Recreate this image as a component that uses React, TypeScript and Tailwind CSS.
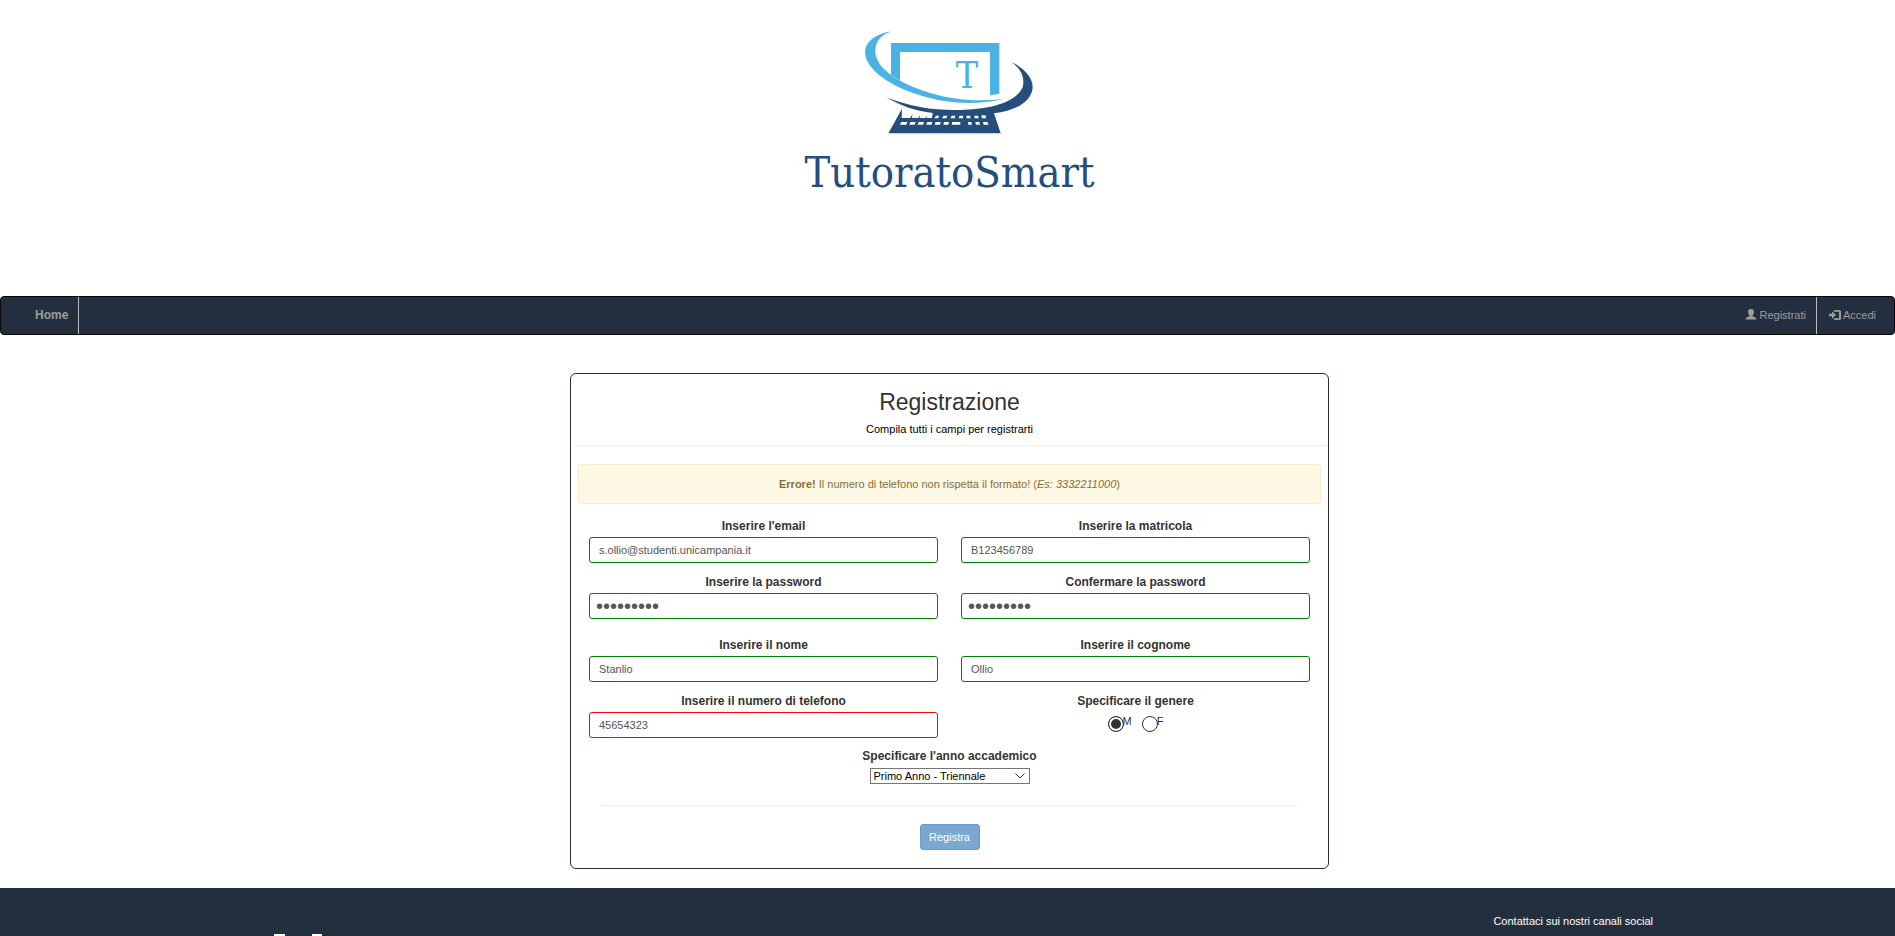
import React, { useState } from "react";

function LaptopLogo() {
  return (
    <svg viewBox="0 0 960 360" width="320" height="120" aria-hidden="true">
      <g fill="#4bb3e3">
        <path d="M303 69H628V221L600 226V96H330V182L303 164Z" />
        <path d="M306 34C240 44 222 78 226 104C232 150 300 198 390 226C470 252 560 256 642 237C560 246 480 240 400 212C310 180 262 142 256 98C254 66 272 44 306 34Z" />
        <text x="531" y="205" textAnchor="middle" fontSize="112" fontFamily="'DejaVu Serif Condensed','DejaVu Serif',serif">
          T
        </text>
      </g>
      <g fill="#254e7d">
        <path d="M664 126C704 144 728 174 728 200C727 242 680 272 612 280L632 340H295L336 266L335 294H360L368 282L365 294H384L390 284L388 294H406L412 286L409 294H426L428 279C380 274 330 258 290 232C360 262 440 272 510 270C610 268 680 244 698 202C706 170 690 144 664 126Z" />
      </g>
      <g fill="#fff">
        <path d="M461 287h11l-3 8h-13zM485 287h11l-2 8h-12zM508 287h11v8h-12zM530 287h11v8h-12zM553 287h11l2 8h-12zM574 286h12l3 9h-13zM438 287h10l-4 8h-11z" />
        <path d="M334 306h18l-3 8h-19zM361 306h16l-3 8h-16zM386 306h16l-3 8h-16zM412 306h15l-3 8h-15zM437 306h15l-2 8h-16zM462 306h15l-2 8h-15zM487 306h24v8h-26zM534 306h10l2 8h-11zM556 306h12l2 8h-12zM579 306h13l4 8h-15z" />
      </g>
    </svg>
  );
}

function UserIcon() {
  return (
    <svg viewBox="0 0 12 11" width="12" height="11" fill="currentColor" aria-hidden="true">
      <path d="M6 0C8 0 9 1.300 9 3C9 4.600 8.300 5.700 7.500 6.400V7.300C9 8 11.500 8.500 11.500 10.500H.5C.5 8.500 3 8 4.500 7.300V6.400C3.700 5.700 3 4.600 3 3C3 1.300 4 0 6 0Z" />
    </svg>
  );
}

function LoginIcon() {
  return (
    <svg viewBox="0 0 12 10" width="12" height="10" fill="currentColor" aria-hidden="true">
      <path d="M0 3.800H3V1.300L7 5L3 8.700V6.200H0ZM5 0H10.500Q12 0 12 1.500V8.500Q12 10 10.500 10H5V8.200H10V1.800H5Z" />
    </svg>
  );
}

type FieldProps = {
  id: string;
  label: string;
  value: string;
  type?: string;
  invalid?: boolean;
};

function Field({ id, label, value, type = "text", invalid = false }: FieldProps) {
  const [text, setText] = useState(value);
  return (
    <div className="flex flex-col">
      <label htmlFor={id} className="pb-0.5 text-center text-xs leading-[18px] font-bold">
        {label}
      </label>
      <input
        id={id}
        type={type}
        value={text}
        onChange={(e) => setText(e.target.value)}
        className={`h-[26px] w-full rounded-[3px] border bg-white text-[#555] outline-none ${
          type === "password" ? "px-[6px] text-xl" : "px-[9px] text-[11px]"
        } ${invalid ? "border-[#f00]" : "border-[#008000]"}`}
      />
    </div>
  );
}

function Radio({ value, checked, onSelect }: { value: string; checked: boolean; onSelect: () => void }) {
  return (
    <label className="flex items-start">
      <input
        type="radio"
        name="genere"
        value={value}
        checked={checked}
        onChange={onSelect}
        className="size-4 appearance-none rounded-full border border-[#333] bg-white checked:bg-[#333] checked:shadow-[inset_0_0_0_2px_#fff]"
      />
      <span className="-ml-px leading-[10px]">{value}</span>
    </label>
  );
}

export default function App() {
  const [gender, setGender] = useState("M");
  return (
    <div className="flex h-screen flex-col overflow-hidden bg-white font-['Liberation_Sans',Arial,sans-serif] text-[11px] leading-4 text-[#333]">
      <header className="flex h-[296px] shrink-0 flex-col items-center pt-5 pl-1">
        <LaptopLogo />
        <div className="pt-0.5 text-[43px] leading-[60px] text-[#254e7d] font-['DejaVu_Serif_Condensed','DejaVu_Serif',serif]">
          TutoratoSmart
        </div>
      </header>

      <nav className="flex h-[39px] shrink-0 items-stretch justify-between rounded border border-[#080808] bg-[#232f3e] text-[#9d9d9d]">
        <a
          href="#home"
          className="flex items-center border-r border-[#bbb] pr-[10px] pb-0.5 pl-[34px] text-xs font-bold"
        >
          Home
        </a>
        <div className="flex items-stretch">
          <a href="#registrati" className="flex items-center gap-[3px] border-r border-[#bbb] pr-[10px] pb-0.5">
            <UserIcon />
            Registrati
          </a>
          <a href="#accedi" className="flex items-center gap-0.5 pr-[18px] pb-0.5 pl-3">
            <LoginIcon />
            Accedi
          </a>
        </div>
      </nav>

      <main className="flex shrink-0 justify-center pt-[38px] pb-[19px] pl-1">
        <form
          onSubmit={(e) => e.preventDefault()}
          className="w-full max-w-[759px] rounded-md border border-[#232f3e] pb-[18px]"
        >
          <div className="mx-px border-b border-[#eee] pt-[14px] pb-2 text-center">
            <h1 className="text-[23px] leading-7">Registrazione</h1>
            <p className="pt-[5px] text-black">Compila tutti i campi per registrarti</p>
          </div>

          <div className="mx-[7px] mt-[18px] rounded-[3px] border border-[#faebcc] bg-[#fcf8e3] py-[11px] text-center text-[#8a6d3b]">
            <strong>Errore!</strong> Il numero di telefono non rispetta il formato! (<em>Es: 3332211000</em>)
          </div>

          <div className="mx-[18px] mt-[13px] grid grid-cols-2 gap-x-[23px] gap-y-[10px]">
            <Field id="email" label="Inserire l'email" value="s.ollio@studenti.unicampania.it" />
            <Field id="matricola" label="Inserire la matricola" value="B123456789" />
            <Field id="password" label="Inserire la password" value="password1" type="password" />
            <Field id="conferma" label="Confermare la password" value="password1" type="password" />
          </div>
          <div className="mx-[18px] mt-[17px] grid grid-cols-2 gap-x-[23px] gap-y-[10px]">
            <Field id="nome" label="Inserire il nome" value="Stanlio" />
            <Field id="cognome" label="Inserire il cognome" value="Ollio" />
            <Field id="telefono" label="Inserire il numero di telefono" value="45654323" invalid />
            <fieldset>
              <legend className="w-full pb-0.5 text-center text-xs leading-[18px] font-bold">
                Specificare il genere
              </legend>
              <div className="flex justify-center gap-[10px] pt-1">
                <Radio value="M" checked={gender === "M"} onSelect={() => setGender("M")} />
                <Radio value="F" checked={gender === "F"} onSelect={() => setGender("F")} />
              </div>
            </fieldset>
          </div>

          <div className="flex flex-col items-center pt-2">
            <label htmlFor="anno" className="text-xs leading-5 font-bold">
              Specificare l'anno accademico
            </label>
            <div className="relative mt-0.5 flex">
              <select
                id="anno"
                className="h-4 w-40 appearance-none border border-[#767676] bg-white pl-[3px] text-[11px] leading-[14px] text-black"
              >
                <option>Primo Anno - Triennale</option>
                <option>Secondo Anno - Triennale</option>
                <option>Terzo Anno - Triennale</option>
              </select>
              <svg
                viewBox="0 0 10 6"
                width="10"
                height="6"
                className="pointer-events-none absolute top-[5px] right-[5px]"
                fill="none"
                stroke="#333"
                aria-hidden="true"
              >
                <path d="M.5.5L5 5L9.500.5" />
              </svg>
            </div>
          </div>

          <hr className="mx-[30px] mt-[21px] border-[#eee]" />

          <div className="mt-[18px] flex justify-center">
            <button
              type="submit"
              disabled
              className="h-[26px] w-[60px] rounded-[3px] border border-[#6d9cc7] bg-[#7aa8d0] text-[11px] text-white"
            >
              Registra
            </button>
          </div>
        </form>
      </main>

      <footer className="flex min-h-0 grow items-start justify-between bg-[#232f3e] text-white">
        <svg viewBox="0 0 50 20" width="50" height="20" fill="#fff" className="mt-[46px] ml-[274px]" aria-hidden="true">
          <path d="M0 0H11V20H0ZM38 0H48V20H38Z" />
        </svg>
        <p className="pt-[25px] pr-[242px]">Contattaci sui nostri canali social</p>
      </footer>
    </div>
  );
}
